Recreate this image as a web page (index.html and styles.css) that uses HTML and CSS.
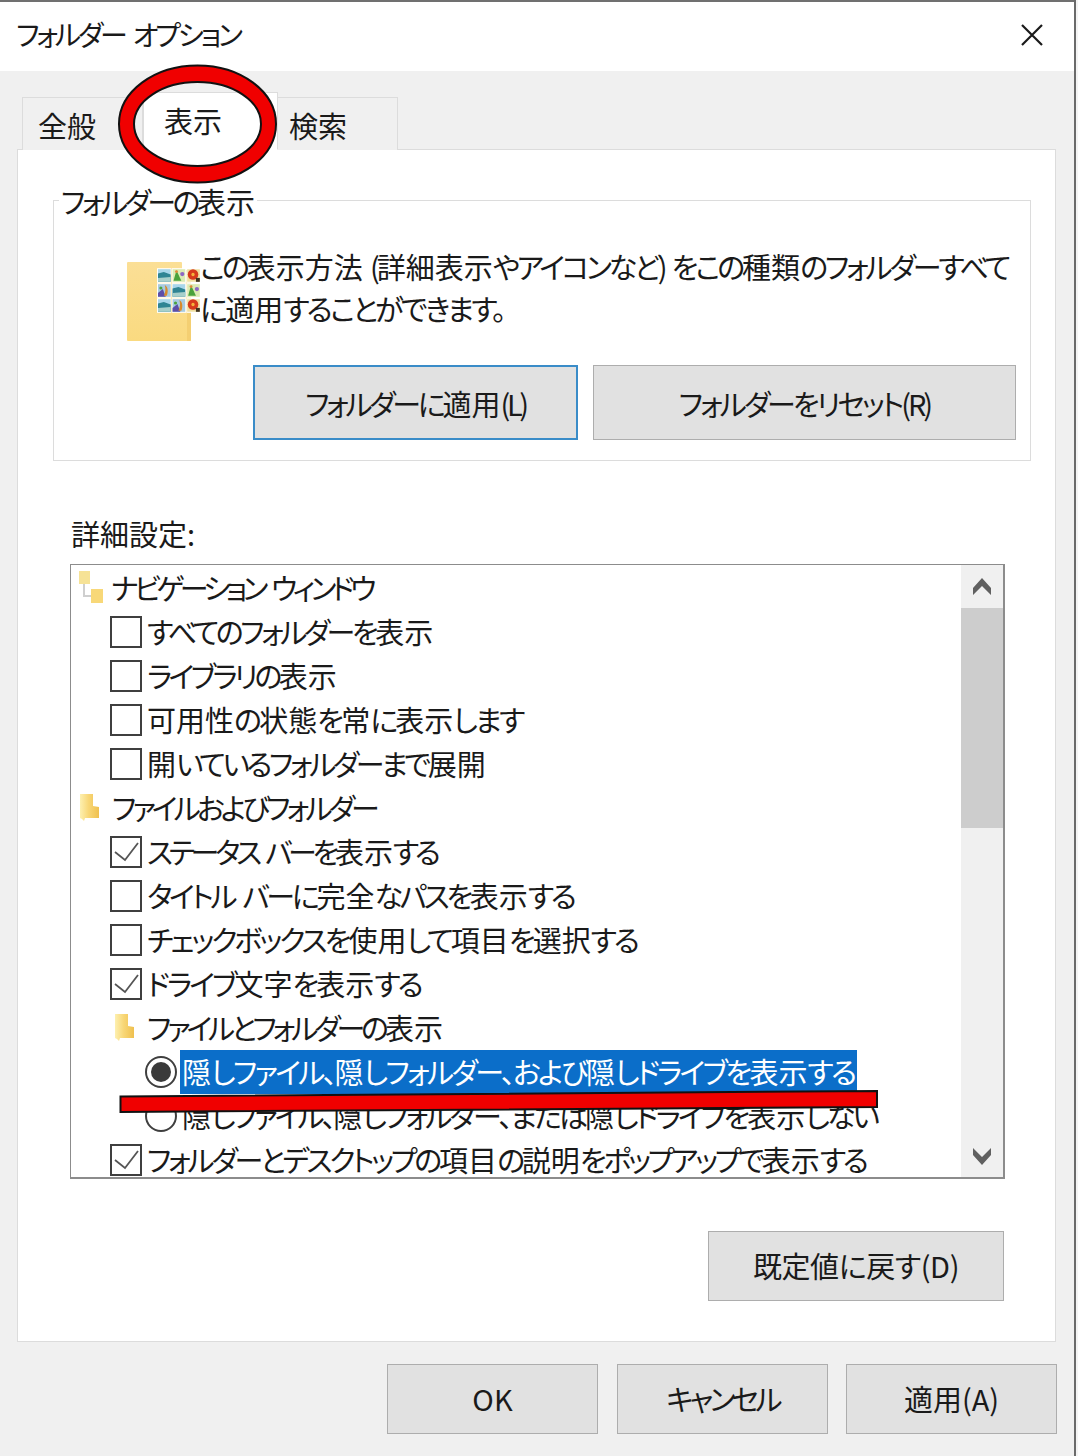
FILE: index.html
```html
<!DOCTYPE html>
<html lang="ja">
<head>
<meta charset="utf-8">
<title>フォルダー オプション</title>
<link rel="stylesheet" href="styles.css">
</head>
<body>
<svg class="defs" width="0" height="0" aria-hidden="true">
  <defs>
    <linearGradient id="folderFill" x1="0" y1="0" x2="0" y2="1"><stop offset="0" stop-color="#fbdf96"/><stop offset="1" stop-color="#fada80"/></linearGradient>
    <linearGradient id="sideFill" x1="0" y1="0" x2="1" y2="0"><stop offset="0" stop-color="#fdf0b0"/><stop offset=".45" stop-color="#f8d777"/><stop offset="1" stop-color="#efc04f"/></linearGradient>
    <symbol id="land" viewBox="0 0 15 15"><rect width="15" height="15" fill="#fff"/><rect x="1" y="1" width="13" height="13" fill="#a9d6ea"/><path d="M1 5.500 7 4 14 6.500V14H1Z" fill="#2f8493"/><path d="M1 10 14 9V14H1Z" fill="#a8cfca"/></symbol>
    <symbol id="plant" viewBox="0 0 15 15"><rect width="15" height="15" fill="#fff"/><rect x="1" y="1" width="13" height="13" fill="#dcebb4"/><path d="M5 2 10 13H2Z" fill="#4aa23c"/><circle cx="11" cy="6" r="2.200" fill="#8d68c4"/><circle cx="5" cy="3.500" r="1.500" fill="#e08a3c"/></symbol>
    <symbol id="flower" viewBox="0 0 15 15"><rect width="15" height="15" fill="#fff"/><path d="M1 1H14V14H1Z" fill="#f0dfa0"/><circle cx="7" cy="6.500" r="5.400" fill="#d63a1c"/><circle cx="7" cy="6.500" r="1.700" fill="#f4b13a"/><rect x="10" y="10" width="4" height="4" fill="#3e3220"/></symbol>
    <symbol id="mixed" viewBox="0 0 15 15"><rect width="15" height="15" fill="#fff"/><rect x="1" y="1" width="13" height="13" fill="#a8cbe0"/><path d="M1 10 6 6 9 14H1Z" fill="#5d4ea8"/><path d="M8 2C11 3 12 8 10 13H7C9 9 9 5 8 2Z" fill="#d98a2a"/><circle cx="4" cy="5" r="1.600" fill="#4aa23c"/></symbol>
  </defs>
</svg>
<div class="screen">
  <div class="window">
    <header class="titlebar">
      <span class="title t-32 ws">フォルダー オプション</span>
      <svg class="close" width="22" height="22" viewBox="0 0 22 22"><path d="M1 1 21 21M21 1 1 21" stroke="#1a1a1a" stroke-width="2.200" fill="none"/></svg>
    </header>
    <div class="body">
      <nav class="tabs">
        <div class="tab tab-general">全般</div>
        <div class="tab tab-view">表示</div>
        <div class="tab tab-search">検索</div>
      </nav>
      <main class="panel">
        <section class="group">
          <span class="legend t-35">フォルダーの<span class="kj">表示</span></span>
          <div class="message">
            <svg class="folder-big" width="74" height="79" viewBox="0 0 74 79">
              <path d="M0 1Q0 0 1 0H54Q55 0 55 1V8H63Q64 8 64 9V78Q64 79 63 79H1Q0 79 0 78Z" fill="url(#folderFill)"/>
              <path d="M55 8H63Q64 8 64 9V78Q64 79 63 79H60V10Z" fill="#f4cf72"/>
              <use href="#land" x="30" y="6" width="14.600" height="15"/><use href="#plant" x="44.600" y="6" width="14.600" height="15"/><use href="#flower" x="59.200" y="6" width="14.600" height="15"/>
              <use href="#mixed" x="30" y="21" width="14.600" height="15"/><use href="#land" x="44.600" y="21" width="14.600" height="15"/><use href="#plant" x="59.200" y="21" width="14.600" height="15"/>
              <use href="#land" x="30" y="36" width="14.600" height="15"/><use href="#mixed" x="44.600" y="36" width="14.600" height="15"/><use href="#flower" x="59.200" y="36" width="14.600" height="15"/>
            </svg>
            <p class="message-text"><span class="t-315 ws-4">この<span class="kj">表示方法</span> (<span class="kj">詳細表示</span>やアイコンなど) をこの<span class="kj">種類</span>のフォルダーすべて</span><br><span class="t-275">に<span class="kj">適用</span>することができます。</span></p>
          </div>
          <div class="group-actions">
            <button class="btn btn-apply-folder btn-default t-33">フォルダーに<span class="kj">適用</span>(L)</button>
            <button class="btn btn-reset-folder t-30">フォルダーをリセット(R)</button>
          </div>
        </section>

        <div class="list-label">詳細設定:</div>
        <div class="listbox">
          <ul class="rows">
            <li class="row lvl-0"><svg class="ico-tree" width="26" height="34" viewBox="0 0 26 34"><path d="M6 13V25H13" stroke="#cfcfcf" stroke-width="2" fill="none"/><rect x="1" y="0" width="11" height="13" fill="#f6e296"/><rect x="13" y="18" width="12" height="14" fill="#f8d878"/></svg><span class="lbl t-45 ws">ナビゲーション ウィンドウ</span></li>
            <li class="row lvl-1"><span class="check"></span><span class="lbl t-35">すべてのフォルダーを<span class="kj">表示</span></span></li>
            <li class="row lvl-1"><span class="check"></span><span class="lbl t-35">ライブラリの<span class="kj">表示</span></span></li>
            <li class="row lvl-1"><span class="check"></span><span class="lbl t-28"><span class="kj">可用性</span>の<span class="kj">状態</span>を<span class="kj">常</span>に<span class="kj">表示</span>します</span></li>
            <li class="row lvl-1"><span class="check"></span><span class="lbl t-34"><span class="kj">開</span>いているフォルダーまで<span class="kj">展開</span></span></li>
            <li class="row lvl-0"><svg class="ico-folder" width="20" height="28" viewBox="0 0 20 28"><path d="M0 0H13V12L19 13V24H5L4 27 2 25 0 24Z" fill="url(#sideFill)"/></svg><span class="lbl t-39">ファイルおよびフォルダー</span></li>
            <li class="row lvl-1"><span class="check"><svg width="28" height="28" viewBox="0 0 28 28"><path d="M3 14 13 22 26 5" stroke="#555" stroke-width="1.800" fill="none"/></svg></span><span class="lbl t-43 ws">ステータス バーを<span class="kj">表示</span>する</span></li>
            <li class="row lvl-1"><span class="check"></span><span class="lbl t-33 ws">タイトル バーに<span class="kj">完全</span>なパスを<span class="kj">表示</span>する</span></li>
            <li class="row lvl-1"><span class="check"></span><span class="lbl t-295">チェックボックスを<span class="kj">使用</span>して<span class="kj">項目</span>を<span class="kj">選択</span>する</span></li>
            <li class="row lvl-1"><span class="check"><svg width="28" height="28" viewBox="0 0 28 28"><path d="M3 14 13 22 26 5" stroke="#555" stroke-width="1.800" fill="none"/></svg></span><span class="lbl t-29">ドライブ<span class="kj">文字</span>を<span class="kj">表示</span>する</span></li>
            <li class="row lvl-1b"><svg class="ico-folder" width="20" height="28" viewBox="0 0 20 28"><path d="M0 0H13V12L19 13V24H5L4 27 2 25 0 24Z" fill="url(#sideFill)"/></svg><span class="lbl t-41">ファイルとフォルダーの<span class="kj">表示</span></span></li>
            <li class="row lvl-2"><span class="radio radio-on"></span><span class="lbl selected t-265"><span class="kj">隠</span>しファイル、<span class="kj">隠</span>しフォルダー、および<span class="kj">隠</span>しドライブを<span class="kj">表示</span>する</span></li>
            <li class="row lvl-2"><span class="radio"></span><span class="lbl plain t-285"><span class="kj">隠</span>しファイル、<span class="kj">隠</span>しフォルダー、または<span class="kj">隠</span>しドライブを<span class="kj">表示</span>しない</span></li>
            <li class="row lvl-1"><span class="check"><svg width="28" height="28" viewBox="0 0 28 28"><path d="M3 14 13 22 26 5" stroke="#555" stroke-width="1.800" fill="none"/></svg></span><span class="lbl t-32">フォルダーとデスクトップの<span class="kj">項目</span>の<span class="kj">説明</span>をポップアップで<span class="kj">表示</span>する</span></li>
          </ul>
          <div class="scrollbar">
            <div class="sb-btn"><svg width="18" height="17" viewBox="0 0 18 17"><path d="M9 0 18 10V17L9 8 0 17V10Z" fill="#606060"/></svg></div>
            <div class="sb-thumb"></div>
            <div class="sb-track"></div>
            <div class="sb-btn sb-btn-down"><svg width="18" height="17" viewBox="0 0 18 17"><path d="M0 0 9 9 18 0V7L9 17 0 7Z" fill="#606060"/></svg></div>
          </div>
        </div>
        <div class="panel-actions">
          <button class="btn btn-defaults t-04">既定値に戻す(D)</button>
        </div>
      </main>
      <footer class="footer">
        <button class="btn btn-foot">OK</button>
        <button class="btn btn-foot t-38">キャンセル</button>
        <button class="btn btn-foot">適用(A)</button>
      </footer>
    </div>
  </div>
  <div class="edge"></div>
  <svg class="marks" width="1078" height="1456" viewBox="0 0 1078 1456" aria-hidden="true">
    <path fill-rule="evenodd" d="M119 124A78.500 58.500 0 1 1 276 124A78.500 58.500 0 1 1 119 124ZM134 124A63.500 42 0 1 0 261 124A63.500 42 0 1 0 134 124Z" fill="#f00000" stroke="#111" stroke-width="2"/>
    <path d="M120.500 1096.500 877 1091V1107L120.500 1112Z" fill="#f00000" stroke="#111" stroke-width="2"/>
  </svg>
</div>
</body>
</html>
```

FILE: styles.css
```css
* { box-sizing: border-box; }
html, body { margin: 0; padding: 0; }
body {
  width: 1078px;
  height: 1456px;
  overflow: hidden;
  background: #fff;
  color: #1a1a1a;
  font-family: "Noto Sans CJK JP", "Noto Sans", sans-serif;
  font-size: 29px;
  font-feature-settings: "palt";
  line-height: 30px;
}

/* tracking: the reference's UI font has narrower kana than Noto, kanji stay full width */
.t-04 { letter-spacing: -0.4px; }
.t-265 { letter-spacing: -2.65px; }
.t-275 { letter-spacing: -2.75px; }
.t-28 { letter-spacing: -2.8px; }
.t-285 { letter-spacing: -2.85px; }
.t-29 { letter-spacing: -2.9px; }
.t-295 { letter-spacing: -2.95px; }
.t-30 { letter-spacing: -3px; }
.t-315 { letter-spacing: -3.15px; }
.t-32 { letter-spacing: -3.2px; }
.t-33 { letter-spacing: -3.3px; }
.t-34 { letter-spacing: -3.4px; }
.t-35 { letter-spacing: -3.5px; }
.t-38 { letter-spacing: -3.8px; }
.t-39 { letter-spacing: -3.9px; }
.t-41 { letter-spacing: -4.1px; }
.t-43 { letter-spacing: -4.3px; }
.t-45 { letter-spacing: -4.5px; }
.kj { letter-spacing: 0; }
.ws { word-spacing: 5px; }
.ws-4 { word-spacing: 4px; }

.defs { position: absolute; }
.screen { position: relative; display: flex; width: 1078px; height: 1456px; }
.window { width: 1074px; height: 1456px; display: flex; flex-direction: column; border-top: 2px solid #707070; background: #fff; }
.edge { width: 4px; border-left: 2px solid #6a6a6a; background: #f4f4f4; }
.marks { position: absolute; left: 0; top: 0; z-index: 2; pointer-events: none; }

.titlebar { height: 69px; flex: none; display: flex; align-items: center; justify-content: space-between; padding: 0 31px 6px 16px; background: #fff; }
.title { font-size: 28px; }
.close { flex: none; margin-top: 2px; }

.body { flex: 1; background: #f0f0f0; padding-top: 21px; }
.tabs { display: flex; align-items: flex-end; margin: 0 0 -1px 22px; position: relative; z-index: 1; height: 58px; }
.tab { border: 1px solid #dcdcdc; border-bottom: 0; background: #f0f0f0; height: 53px; }
.tab-general { width: 121px; padding: 12px 0 0 15px; }
.tab-view { width: 135px; height: 58px; padding: 12px 0 0 20px; background: #fff; border-bottom: 1px solid #fff; }
.tab-search { width: 120px; padding: 12px 0 0 11px; border-left: 0; }

.panel { margin-left: 17px; width: 1039px; height: 1193px; border: 1px solid #dcdcdc; background: #fff; padding: 50px 23px 0 35px; }
.group { position: relative; width: 978px; height: 261px; border: 1px solid #dcdcdc; padding: 46px 14px 0 73px; }
.legend { position: absolute; left: 5px; top: -15px; padding: 0 2px; background: #fff; line-height: 30px; }
.message { display: flex; height: 84px; margin-bottom: 34px; }
.folder-big { flex: none; margin: 15px -1px 0 0; position: relative; }
.message-text { margin: -2px 0 0; line-height: 42px; white-space: nowrap; position: relative; }
.group-actions { display: flex; justify-content: flex-end; gap: 15px; }

.btn { display: block; margin: 0; padding: 0; background: #e1e1e1; border: 1px solid #adadad; color: #1a1a1a; font-family: inherit; font-size: inherit; font-feature-settings: inherit; line-height: 30px; }
.btn-default { border: 2px solid #3a8cc8; }
.btn-apply-folder { width: 325px; height: 75px; }
.btn-reset-folder { width: 423px; height: 75px; }

.list-label { margin: 57px 0 0 18px; height: 30px; }
.listbox { display: flex; width: 935px; height: 615px; margin: 16px 0 0 17px; border: 2px solid #8c8c8c; border-width: 1px 2px 2px 1px; overflow: hidden; background: #fff; }
.rows { flex: 1; list-style: none; margin: 0; padding: 1px 0 0 0; min-width: 0; }
.row { display: flex; align-items: center; height: 44px; white-space: nowrap; }
.lvl-0 { padding-left: 7px; }
.lvl-0 .ico-tree { margin-right: 7px; }
.lvl-0 .ico-folder { margin: 0 12px 0 2px; }
.lvl-1 { padding-left: 39px; }
.lvl-1b { padding-left: 44px; }
.lvl-1b .ico-folder { margin-right: 12px; }
.lvl-2 { padding-left: 74px; }
.check { flex: none; width: 32px; height: 32px; margin-right: 5px; border: 2px solid #3f3f3f; background: #fff; }
.check svg { display: block; }
.radio { flex: none; position: relative; width: 32px; height: 32px; margin-right: 3px; border: 2px solid #3f3f3f; border-radius: 50%; background: #fff; }
.radio-on::after { content: ""; position: absolute; left: 4px; top: 4px; width: 20px; height: 20px; border-radius: 50%; background: #3a3a3a; }
.lbl { display: block; padding-bottom: 2px; }
.selected { height: 44px; line-height: 42px; padding: 0 3px 2px 2px; background: #0b6ec9; color: #fff; }
.plain { padding-left: 2px; }

.scrollbar { flex: none; width: 42px; display: flex; flex-direction: column; background: #f0f0f0; position: relative; }
.sb-btn { flex: none; height: 43px; display: flex; align-items: center; justify-content: center; }
.sb-btn-down { height: 47px; padding-top: 5px; }
.sb-thumb { flex: none; height: 220px; background: #cdcdcd; }
.sb-track { flex: 1; }

.panel-actions { display: flex; justify-content: flex-end; margin-top: 52px; padding-right: 28px; }
.btn-defaults { width: 296px; height: 70px; padding-bottom: 2px; }

.footer { display: flex; gap: 19px; margin: 22px 0 0 387px; }
.btn-foot { width: 211px; height: 70px; padding-bottom: 2px; }
.btn-foot:last-child { margin-left: -1px; }
```
